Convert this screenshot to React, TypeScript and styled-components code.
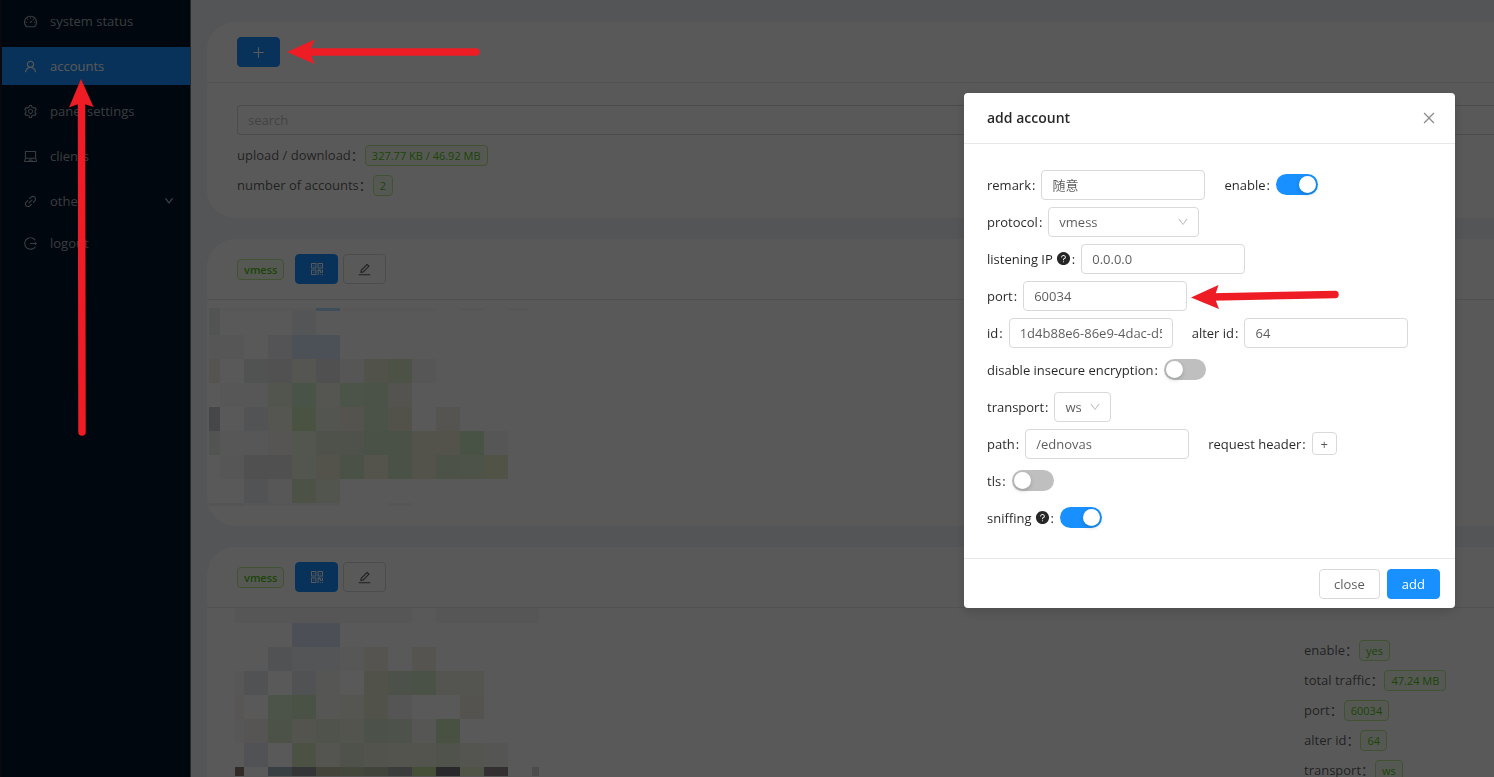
import React from "react";
import styled, { createGlobalStyle } from "styled-components";
import {
  AiOutlineDashboard,
  AiOutlineUser,
  AiOutlineSetting,
  AiOutlineLaptop,
  AiOutlineLink,
  AiOutlineLogout,
  AiOutlineDown,
  AiOutlinePlus,
  AiOutlineQrcode,
  AiOutlineEdit,
  AiOutlineClose,
  AiFillQuestionCircle,
} from "react-icons/ai";

const fontStack = `"Open Sans", "Noto Sans CJK SC", sans-serif`;

const GlobalStyle = createGlobalStyle`
  * { box-sizing: border-box; }
  body {
    margin: 0;
    background: #f0f2f5;
    color: rgba(0, 0, 0, 0.65);
    font: 13px/20px ${fontStack};
  }
  button, input, select { font: inherit; color: inherit; margin: 0; }
`;

const Shell = styled.div`
  display: flex;
  height: 100vh;
  overflow: hidden;
`;

/* ---------- side menu ---------- */

const Sidebar = styled.nav`
  flex: 0 0 191px;
  background: #001529;
  border-left: 2px solid #141c28;
  border-right: 1px solid #6a757f;
  padding-top: 2px;
`;

const MenuList = styled.ul`
  list-style: none;
  margin: 0;
  padding: 0;
`;

const MenuItem = styled.li<{ $tight?: boolean }>`
  margin-bottom: ${(p) => (p.$tight ? 4 : 7)}px;
`;

const MenuLink = styled.a<{ $active?: boolean }>`
  display: flex;
  align-items: center;
  gap: 12px;
  height: 38px;
  padding: 0 16px 0 21px;
  text-decoration: none;
  color: ${(p) => (p.$active ? "#fff" : "rgba(255, 255, 255, 0.65)")};
  background: ${(p) => (p.$active ? "#1890ff" : "transparent")};
`;

const MenuLabel = styled.span`
  flex: 1;
`;

/* ---------- content ---------- */

const Main = styled.main`
  flex: 1;
  min-width: 0;
  display: flex;
  flex-direction: column;
  gap: 21px;
  padding: 22px 0 0 16px;
`;

const Card = styled.section`
  flex: none;
  background: #fff;
  border-radius: 28px 0 0 28px;
  overflow: hidden;
`;

const CardHeader = styled.header`
  display: flex;
  align-items: center;
  height: 61px;
  padding-left: 30px;
  border-bottom: 1px solid #e8e8e8;
`;

const Toolbar = styled.div`
  display: flex;
  gap: 5px;
  margin-left: 11px;
`;

const Button = styled.button<{ $primary?: boolean }>`
  display: inline-flex;
  align-items: center;
  justify-content: center;
  height: 30px;
  padding: 0 14px;
  border: 1px solid ${(p) => (p.$primary ? "#1890ff" : "#d9d9d9")};
  border-radius: 4px;
  background: ${(p) => (p.$primary ? "#1890ff" : "#fff")};
  color: ${(p) => (p.$primary ? "#fff" : "rgba(0, 0, 0, 0.65)")};
`;

const IconButton = styled(Button)`
  width: 43px;
  padding: 0;
`;

const SummaryBody = styled.div`
  padding: 22px 0 18px 30px;
`;

const SearchInput = styled.input`
  display: block;
  width: 100%;
  height: 30px;
  margin-bottom: 5px;
  padding: 0 10px;
  border: 1px solid #d9d9d9;
  border-right: 0;
  border-radius: 4px 0 0 4px;
  background: #fff;
  &::placeholder { color: #bfbfbf; }
`;

const StatRow = styled.div`
  display: flex;
  align-items: center;
  height: 30px;
`;

const Tag = styled.span<{ $strong?: boolean }>`
  display: inline-block;
  height: 21px;
  padding: 0 6px;
  border: 1px solid #b7eb8f;
  border-radius: 4px;
  background: #f6ffed;
  color: #52c41a;
  font-size: 11px;
  line-height: 19px;
  font-weight: ${(p) => (p.$strong ? 600 : 400)};
`;

const StatName = styled.span`
  margin-right: 1px;
`;

const AccountBody = styled.div<{ $inset: number }>`
  display: grid;
  grid-template-columns: 1fr 190px;
  align-items: start;
  min-height: 226px;
  padding-left: ${(p) => p.$inset}px;
`;

const AccountStats = styled.div`
  padding-top: 27px;
`;

const Pixels = styled.svg<{ $gap: number }>`
  display: block;
  margin-top: ${(p) => p.$gap}px;
  filter: saturate(1.9);
`;

/* ---------- dialog ---------- */

const Mask = styled.div`
  position: fixed;
  inset: 0;
  display: flex;
  justify-content: flex-end;
  align-items: flex-start;
  padding: 93px 39px 0 0;
  background: rgba(0, 0, 0, 0.65);
`;

const Dialog = styled.div`
  width: 491px;
  background: #fff;
  border-radius: 4px;
  box-shadow: 0 4px 12px rgba(0, 0, 0, 0.15);
`;

const DialogHeader = styled.header`
  display: flex;
  align-items: center;
  justify-content: space-between;
  height: 51px;
  padding: 0 18px 0 23px;
  border-bottom: 1px solid #e8e8e8;
`;

const DialogTitle = styled.h1`
  margin: 0;
  font-size: 14px;
  font-weight: 600;
  color: rgba(0, 0, 0, 0.85);
`;

const CloseButton = styled.button`
  display: flex;
  padding: 0;
  border: 0;
  background: none;
  color: rgba(0, 0, 0, 0.45);
`;

const DialogBody = styled.form`
  padding: 22px 23px;
`;

const FormRow = styled.div`
  display: flex;
  align-items: center;
  gap: 19px;
  height: 37px;
`;

const FormItem = styled.div`
  display: flex;
  align-items: center;
`;

const Label = styled.label`
  display: inline-flex;
  align-items: center;
  margin-right: 6px;
  color: rgba(0, 0, 0, 0.85);
`;

const Colon = styled.span`
  margin-left: 1px;
`;

const HelpIcon = styled(AiFillQuestionCircle)`
  margin-left: 3px;
`;

const TextInput = styled.input`
  width: 164px;
  height: 30px;
  padding: 0 10px;
  border: 1px solid #d9d9d9;
  border-radius: 4px;
  background: #fff;
`;

const SelectBox = styled.div<{ $width: number }>`
  position: relative;
  width: ${(p) => p.$width}px;
  > select {
    appearance: none;
    display: block;
    width: 100%;
    height: 30px;
    padding: 0 10px;
    border: 1px solid #d9d9d9;
    border-radius: 4px;
    background: #fff;
  }
  > svg {
    position: absolute;
    right: 10px;
    top: 9px;
    color: rgba(0, 0, 0, 0.25);
    pointer-events: none;
  }
`;

const Switch = styled.input`
  appearance: none;
  display: flex;
  align-items: center;
  width: 42px;
  height: 21px;
  padding: 0 2px;
  border-radius: 11px;
  background: #bfbfbf;
  &::before {
    content: "";
    width: 17px;
    height: 17px;
    border-radius: 50%;
    background: #fff;
    box-shadow: 0 2px 4px rgba(0, 35, 11, 0.2);
  }
  &:checked { background: #1890ff; justify-content: flex-end; }
`;

const SmallButton = styled(Button)`
  width: 25px;
  height: 23px;
  padding: 0;
`;

const DialogFooter = styled.footer`
  display: flex;
  justify-content: flex-end;
  gap: 7px;
  padding: 10px 15px 9px;
  border-top: 1px solid #e8e8e8;
`;

const Arrows = styled.svg`
  position: fixed;
  left: 0;
  top: 0;
  width: 100%;
  height: 100%;
  pointer-events: none;
`;

/* ---------- data ---------- */

const menu = [
  { label: "system status", Icon: AiOutlineDashboard },
  { label: "accounts", Icon: AiOutlineUser, active: true },
  { label: "panel settings", Icon: AiOutlineSetting },
  { label: "clients", Icon: AiOutlineLaptop },
  { label: "other", Icon: AiOutlineLink, sub: true },
  { label: "logout", Icon: AiOutlineLogout },
];

const stats = [
  ["enable", "yes"],
  ["total traffic", "47.24 MB"],
  ["port", "60034"],
  ["alter id", "64"],
  ["transport", "ws"],
];

/* Blocks of the obscured account details: [x, y, width, height, fill] */
type Block = [number, number, number, number, string];

const firstBlocks: Block[] = [
  [0, 0, 11, 27, "#eceeed"], [11, 0, 96, 3, "#f8f8f8"], [107, 0, 24, 3, "#c4dcf2"], [131, 0, 96, 3, "#f8f8f8"],
  [251, 0, 24, 3, "#f7f7f7"], [299, 0, 20, 3, "#f7f7f7"], [83, 3, 24, 24, "#f1f3f6"],
  [0, 27, 35, 24, "#f7f7f6"], [59, 27, 24, 24, "#f0f1f3"], [83, 27, 48, 24, "#dfe8ef"],
  [0, 51, 11, 24, "#f3f1ea"], [35, 51, 24, 24, "#e9ecec"], [59, 51, 24, 24, "#e7e7e7"], [83, 51, 24, 24, "#f3f2ec"],
  [107, 51, 24, 24, "#e6e6e6"], [131, 51, 24, 24, "#f7f7f7"], [155, 51, 24, 24, "#e9ebdf"], [179, 51, 24, 24, "#dfe8d5"], [203, 51, 24, 24, "#f7f7f7"],
  [11, 75, 48, 24, "#f8f8f8"], [59, 75, 24, 24, "#ecefe6"], [83, 75, 24, 24, "#dcead8"], [107, 75, 24, 24, "#f2f3ee"],
  [131, 75, 24, 24, "#e1ebdb"], [155, 75, 24, 24, "#dde8d9"], [179, 75, 24, 24, "#f1eeea"],
  [0, 99, 11, 24, "#c9cacc"], [35, 99, 24, 24, "#ebedee"], [59, 99, 24, 24, "#f2f3ef"], [83, 99, 24, 24, "#dbe8cf"],
  [107, 99, 24, 24, "#eff1eb"], [131, 99, 24, 24, "#eeede5"], [155, 99, 24, 24, "#dde8d9"], [179, 99, 24, 24, "#ecebde"], [227, 99, 24, 24, "#f1efec"],
  [0, 123, 11, 24, "#eaeeeb"], [11, 123, 48, 24, "#f8f8f8"], [59, 123, 24, 24, "#f5f4f2"], [83, 123, 24, 24, "#eff1e9"],
  [107, 123, 48, 24, "#e3eadd"], [155, 123, 48, 24, "#dce7d9"], [203, 123, 48, 24, "#ecece3"], [251, 123, 24, 24, "#d8e7d3"], [275, 123, 24, 24, "#f5f5f5"],
  [11, 147, 24, 24, "#f7f7f7"], [35, 147, 48, 24, "#e6e6e6"], [83, 147, 24, 24, "#eff1e9"], [107, 147, 24, 24, "#ecece0"],
  [131, 147, 24, 24, "#dce8d9"], [155, 147, 24, 24, "#efefe5"], [179, 147, 24, 24, "#dce7d9"], [203, 147, 24, 24, "#ecece0"],
  [227, 147, 24, 24, "#e0e9da"], [251, 147, 24, 24, "#e4ebdc"], [275, 147, 24, 24, "#e9ebd9"],
  [35, 171, 24, 24, "#ecedee"], [59, 171, 24, 24, "#f8f8f8"], [83, 171, 24, 24, "#dfe8d5"], [107, 171, 24, 24, "#ecefe6"],
  [0, 195, 35, 3, "#efefef"], [35, 195, 96, 3, "#f6f6f6"], [179, 195, 24, 3, "#f6f6f6"],
];

const secondBlocks: Block[] = [
  [0, 0, 177, 15, "#f6f6f6"], [201, 0, 103, 15, "#f6f6f6"],
  [57, 15, 48, 24, "#dfe4ee"],
  [33, 39, 24, 24, "#e8eaed"], [57, 39, 48, 24, "#f2f4f7"], [105, 39, 24, 24, "#f9f8f8"], [129, 39, 24, 24, "#f1f0ec"], [177, 39, 24, 24, "#f1f0ec"],
  [0, 63, 9, 24, "#f9f9f9"], [9, 63, 24, 24, "#e9ebee"], [57, 63, 24, 24, "#e9ebed"], [81, 63, 24, 24, "#f5f6f2"],
  [129, 63, 24, 24, "#e9ecdf"], [153, 63, 24, 24, "#e0e9db"], [177, 63, 24, 24, "#dce8d7"], [201, 63, 48, 24, "#efefea"],
  [0, 87, 9, 24, "#f7f6f5"], [33, 87, 24, 24, "#e0eadb"], [57, 87, 24, 24, "#dce8d5"], [81, 87, 24, 24, "#f7f7f5"],
  [105, 87, 24, 24, "#f3f4ef"], [129, 87, 24, 24, "#e9ebdd"], [153, 87, 24, 24, "#f4f4f5"], [225, 87, 24, 24, "#efeeea"],
  [0, 111, 9, 24, "#f9f9f9"], [9, 111, 24, 24, "#f4f3f0"], [33, 111, 24, 24, "#e0e9d8"], [57, 111, 24, 24, "#efefe6"],
  [81, 111, 24, 24, "#e5ebe0"], [105, 111, 24, 24, "#eff0e7"], [129, 111, 24, 24, "#dfe8da"], [153, 111, 24, 24, "#e1e9dc"],
  [177, 111, 24, 24, "#f6f6f4"], [201, 111, 24, 24, "#d9e6cf"],
  [9, 135, 24, 24, "#eaecef"], [57, 135, 24, 24, "#dde8d1"], [81, 135, 24, 24, "#f1f2ed"], [105, 135, 24, 24, "#e3eadd"],
  [129, 135, 24, 24, "#eaede3"], [153, 135, 48, 24, "#eff0e9"], [201, 135, 24, 24, "#e5ebdf"], [225, 135, 24, 24, "#efefe9"], [249, 135, 24, 24, "#f3f2f0"],
  [0, 159, 9, 9, "#857d75"], [33, 159, 24, 9, "#abb6ba"], [57, 159, 24, 9, "#98969a"], [81, 159, 24, 9, "#c2c1b4"],
  [105, 159, 24, 9, "#c6cab9"], [129, 159, 24, 9, "#bdc2b3"], [153, 159, 24, 9, "#abafaf"], [177, 159, 24, 9, "#cddbb9"],
  [201, 159, 24, 9, "#75757a"], [225, 159, 24, 9, "#e7edda"], [249, 159, 24, 9, "#918c8e"], [297, 159, 7, 9, "#d9d9d9"],
];

/* ---------- pieces ---------- */

function Mosaic({ blocks, width, height, gap }: { blocks: Block[]; width: number; height: number; gap: number }) {
  return (
    <Pixels $gap={gap} width={width} height={height} shapeRendering="crispEdges" aria-hidden="true">
      {blocks.map(([x, y, w, h, fill], i) => (
        <rect key={i} x={x} y={y} width={w} height={h} fill={fill} />
      ))}
    </Pixels>
  );
}

function AccountHeader() {
  return (
    <CardHeader>
      <Tag $strong>vmess</Tag>
      <Toolbar>
        <IconButton $primary aria-label="QR code"><AiOutlineQrcode size={16} /></IconButton>
        <IconButton aria-label="edit"><AiOutlineEdit size={15} /></IconButton>
      </Toolbar>
    </CardHeader>
  );
}

function Stat({ name, value }: { name: string; value: string }) {
  return (
    <StatRow>
      <StatName>{name}：</StatName>
      <Tag>{value}</Tag>
    </StatRow>
  );
}

function Field({ id, label, help, children }: { id: string; label: string; help?: boolean; children: React.ReactNode }) {
  return (
    <FormItem>
      <Label htmlFor={id}>
        {label}
        {help && <HelpIcon size={15} />}
        <Colon>:</Colon>
      </Label>
      {children}
    </FormItem>
  );
}

function Select({ id, value, width }: { id: string; value: string; width: number }) {
  return (
    <SelectBox $width={width}>
      <select id={id} defaultValue={value}>
        <option>{value}</option>
      </select>
      <AiOutlineDown size={12} />
    </SelectBox>
  );
}

export default function App() {
  return (
    <>
      <GlobalStyle />
      <Shell>
        <Sidebar>
          <MenuList>
            {menu.map(({ label, Icon, active, sub }) => (
              <MenuItem key={label} $tight={sub}>
                <MenuLink href="#" $active={active}>
                  <Icon size={15} />
                  <MenuLabel>{label}</MenuLabel>
                  {sub && <AiOutlineDown size={10} strokeWidth={60} />}
                </MenuLink>
              </MenuItem>
            ))}
          </MenuList>
        </Sidebar>

        <Main>
          <Card>
            <CardHeader>
              <IconButton $primary aria-label="add"><AiOutlinePlus size={15} /></IconButton>
            </CardHeader>
            <SummaryBody>
              <SearchInput placeholder="search" aria-label="search" />
              <Stat name="upload / download" value="327.77 KB / 46.92 MB" />
              <Stat name="number of accounts" value="2" />
            </SummaryBody>
          </Card>

          <Card>
            <AccountHeader />
            <AccountBody $inset={2}>
              <Mosaic blocks={firstBlocks} width={319} height={198} gap={8} />
            </AccountBody>
          </Card>

          <Card>
            <AccountHeader />
            <AccountBody $inset={28}>
              <Mosaic blocks={secondBlocks} width={304} height={168} gap={0} />
              <AccountStats>
                {stats.map(([name, value]) => (
                  <Stat key={name} name={name} value={value} />
                ))}
              </AccountStats>
            </AccountBody>
          </Card>
        </Main>
      </Shell>

      <Mask>
        <Dialog role="dialog" aria-labelledby="dialog-title">
          <DialogHeader>
            <DialogTitle id="dialog-title">add account</DialogTitle>
            <CloseButton aria-label="close dialog"><AiOutlineClose size={16} /></CloseButton>
          </DialogHeader>
          <DialogBody>
            <FormRow>
              <Field id="remark" label="remark"><TextInput id="remark" defaultValue="随意" /></Field>
              <Field id="enable" label="enable"><Switch id="enable" type="checkbox" defaultChecked /></Field>
            </FormRow>
            <FormRow>
              <Field id="protocol" label="protocol"><Select id="protocol" value="vmess" width={151} /></Field>
            </FormRow>
            <FormRow>
              <Field id="listen" label="listening IP" help><TextInput id="listen" defaultValue="0.0.0.0" /></Field>
            </FormRow>
            <FormRow>
              <Field id="port" label="port"><TextInput id="port" defaultValue="60034" /></Field>
            </FormRow>
            <FormRow>
              <Field id="uuid" label="id"><TextInput id="uuid" defaultValue="1d4b88e6-86e9-4dac-d5" /></Field>
              <Field id="alter" label="alter id"><TextInput id="alter" defaultValue="64" /></Field>
            </FormRow>
            <FormRow>
              <Field id="insecure" label="disable insecure encryption"><Switch id="insecure" type="checkbox" /></Field>
            </FormRow>
            <FormRow>
              <Field id="transport" label="transport"><Select id="transport" value="ws" width={57} /></Field>
            </FormRow>
            <FormRow>
              <Field id="path" label="path"><TextInput id="path" defaultValue="/ednovas" /></Field>
              <Field id="header" label="request header">
                <SmallButton id="header" type="button" aria-label="add header">+</SmallButton>
              </Field>
            </FormRow>
            <FormRow>
              <Field id="tls" label="tls"><Switch id="tls" type="checkbox" /></Field>
            </FormRow>
            <FormRow>
              <Field id="sniffing" label="sniffing" help><Switch id="sniffing" type="checkbox" defaultChecked /></Field>
            </FormRow>
          </DialogBody>
          <DialogFooter>
            <Button>close</Button>
            <Button $primary>add</Button>
          </DialogFooter>
        </Dialog>
      </Mask>

      <Arrows aria-hidden="true">
        <g fill="#ee1c25" stroke="#ee1c25" strokeLinecap="round">
          <path d="M308 52H476" strokeWidth="7.5" />
          <path d="M287 52 314.500 39.500 310 52 314.500 64Z" stroke="none" />
          <path d="M81.500 100 82 432" strokeWidth="7.500" />
          <path d="M81 79 93.500 107 81 103 69 107.500Z" stroke="none" />
          <path d="M1212 297 1335 294.500" strokeWidth="7.500" />
          <path d="M1191 297.500 1218.500 285 1214.500 297 1219 309Z" stroke="none" />
        </g>
      </Arrows>
    </>
  );
}
